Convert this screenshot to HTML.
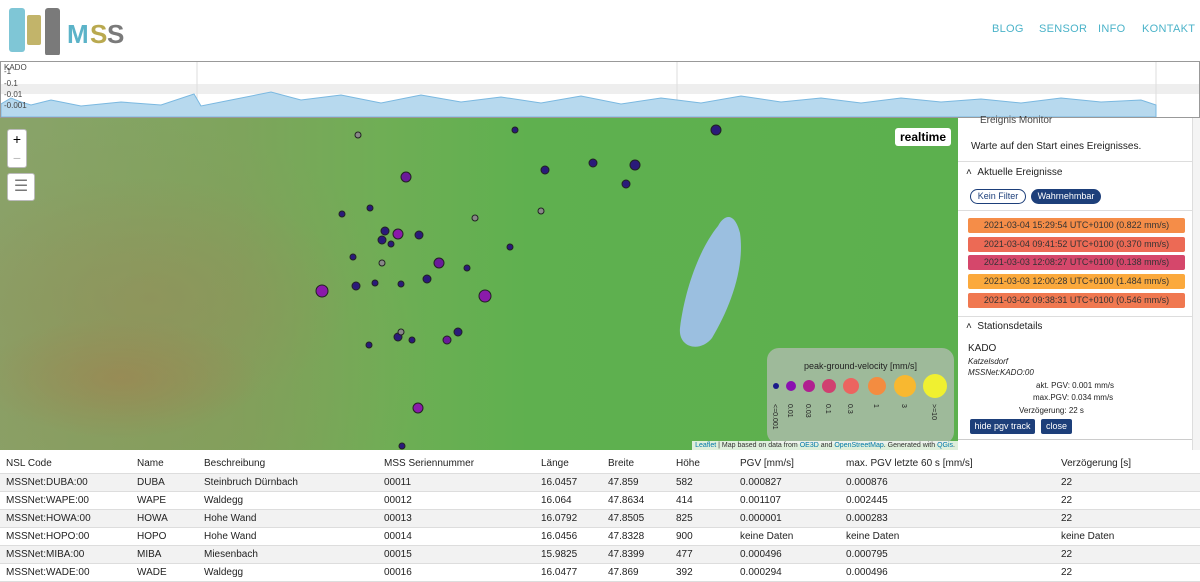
<!DOCTYPE html>
<html><head><meta charset="utf-8"><style>
*{box-sizing:border-box;margin:0;padding:0}
body{width:1200px;height:577px;overflow:hidden;font-family:"Liberation Sans",sans-serif;background:#fff;position:relative}
.nav a{position:absolute;top:23px;color:#4bb3c9;font-size:11px;letter-spacing:.3px;text-decoration:none}
#chart{position:absolute;left:0;top:61px;width:1200px;height:57px;border:1px solid #999;background:#fff}
#map{position:absolute;left:0;top:118px;width:958px;height:332px;overflow:hidden;
background:
radial-gradient(ellipse 140px 60px at 120px 260px,rgba(160,130,80,.6),transparent),
radial-gradient(ellipse 200px 120px at 150px 180px,rgba(150,140,90,.5),transparent),
radial-gradient(ellipse 300px 250px at 130px 250px,rgba(140,150,90,.6),transparent),
linear-gradient(90deg,#8aa36a 0%,#7ea45c 25%,#6fae55 40%,#5fb04f 55%,#5cb04e 100%)}
#panel{position:absolute;left:958px;top:118px;width:234px;height:322px;background:#fff;font-size:10px;color:#222;font-family:"Liberation Sans",sans-serif;border-bottom:1px solid #ccc}
.ev{position:absolute;left:10px;width:217px;height:15px;border-radius:2px;font-size:9px;text-align:center;line-height:15px;color:#333}
table{position:absolute;left:0;top:455px;width:1200px;border-collapse:collapse;font-size:10px;color:#222}
td,th{height:18px;text-align:left;font-weight:normal;padding-left:6px;border-bottom:1px solid #ddd;white-space:nowrap}
tr:nth-child(even) td{background:#f2f2f2}
.btn{position:absolute;background:#1d3f7a;color:#fff;font-size:9px;border-radius:2px;height:15px;line-height:15px;text-align:center}
</style></head><body>
<svg style="position:absolute;left:8px;top:5px" width="120" height="50">
<rect x="1" y="3" width="16" height="44" rx="3" fill="#5fb8cc" opacity=".8"/>
<rect x="19" y="10" width="14" height="30" rx="2" fill="#c2b46a"/>
<rect x="37" y="3" width="15" height="48" rx="3" fill="#7a7a7a"/>
<text x="59" y="38" font-family="Liberation Sans" font-size="26" font-weight="bold" fill="#5bb3c8">M</text>
<text x="82" y="38" font-family="Liberation Sans" font-size="26" font-weight="bold" fill="#b9a94f">S</text>
<text x="99" y="38" font-family="Liberation Sans" font-size="26" font-weight="bold" fill="#7a7a7a">S</text>
</svg>
<div class="nav"><a style="left:992px">BLOG</a><a style="left:1039px">SENSOR</a><a style="left:1098px">INFO</a><a style="left:1142px">KONTAKT</a></div>
<div id="chart">
<svg width="1198" height="55" style="position:absolute;left:0;top:0">
<rect x="0" y="22" width="1198" height="10" fill="#eee"/>
<line x1="196" y1="0" x2="196" y2="55" stroke="#ddd"/><line x1="676" y1="0" x2="676" y2="55" stroke="#ddd"/><line x1="1155" y1="0" x2="1155" y2="55" stroke="#ddd"/>
<path d="M0 42 L10 36 L20 40 L30 43 L50 38 L60 40 L80 44 L120 40 L160 43 L193 32 L200 44 L230 38 L270 30 L300 38 L340 33 L380 41 L420 33 L460 40 L500 35 L540 41 L580 34 L620 42 L660 36 L700 41 L740 34 L780 40 L820 36 L860 41 L900 36 L940 40 L980 37 L1020 41 L1060 36 L1100 40 L1140 38 L1155 43 L1155 55 L0 55Z" fill="#b7d9ee" stroke="#7ab8e0"/>
<text x="3" y="8" font-size="8" fill="#444">KADO</text>
<text x="3" y="12" font-size="8" fill="#444">-1</text>
<text x="3" y="24" font-size="8" fill="#444">-0.1</text>
<text x="3" y="35" font-size="8" fill="#444">-0.01</text>
<text x="3" y="46" font-size="8" fill="#444">-0.001</text>
</svg></div>
<div id="map">
<svg width="958" height="332" style="position:absolute;left:0;top:0">
<path d="M718 108 C700 130 685 170 680 210 C678 230 700 235 712 220 C730 190 745 150 740 115 C735 95 725 95 718 108Z" fill="#9bbfe0"/>
<g stroke="#222" stroke-width="1" fill="#2a1a7a">
<circle cx="716" cy="12" r="5"/><circle cx="593" cy="45" r="4"/><circle cx="635" cy="47" r="5"/><circle cx="545" cy="52" r="4"/><circle cx="626" cy="66" r="4"/><circle cx="515" cy="12" r="3"/>
<circle cx="406" cy="59" r="5" fill="#6a1a9a"/><circle cx="342" cy="96" r="3"/><circle cx="370" cy="90" r="3"/><circle cx="398" cy="116" r="5" fill="#8a1aaa"/><circle cx="385" cy="113" r="4"/><circle cx="382" cy="122" r="4"/><circle cx="391" cy="126" r="3"/><circle cx="419" cy="117" r="4"/><circle cx="353" cy="139" r="3"/><circle cx="439" cy="145" r="5" fill="#6a1a9a"/><circle cx="427" cy="161" r="4"/><circle cx="510" cy="129" r="3"/><circle cx="467" cy="150" r="3"/><circle cx="356" cy="168" r="4"/><circle cx="375" cy="165" r="3"/><circle cx="401" cy="166" r="3"/><circle cx="322" cy="173" r="6" fill="#8a1aaa"/><circle cx="485" cy="178" r="6" fill="#8a1aaa"/><circle cx="458" cy="214" r="4"/><circle cx="447" cy="222" r="4" fill="#6a1a9a"/><circle cx="398" cy="219" r="4"/><circle cx="412" cy="222" r="3"/><circle cx="369" cy="227" r="3"/><circle cx="418" cy="290" r="5" fill="#8a1aaa"/><circle cx="402" cy="328" r="3"/><circle cx="358" cy="17" r="3" fill="#888"/><circle cx="475" cy="100" r="3" fill="#888"/><circle cx="541" cy="93" r="3" fill="#888"/><circle cx="382" cy="145" r="3" fill="#888"/><circle cx="401" cy="214" r="3" fill="#888"/>
</g></svg>
<div style="position:absolute;left:7px;top:11px;width:20px;height:39px;background:#fff;border:1px solid #bbb;border-radius:3px;font-size:14px;text-align:center;line-height:19px">+<br><span style="color:#bbb">−</span></div>
<div style="position:absolute;left:7px;top:55px;width:28px;height:28px;background:#fff;border:1px solid #bbb;border-radius:3px;text-align:center;line-height:26px;color:#777">☰</div>
<div style="position:absolute;left:895px;top:10px;padding:2px 5px;background:#fff;border-radius:3px;font-weight:bold;font-size:12px">realtime</div>
<div style="position:absolute;left:767px;top:230px;width:187px;height:96px;background:rgba(180,190,180,.75);border-radius:12px;font-size:9px;color:#222">
<div style="position:absolute;top:13px;width:100%;text-align:center">peak-ground-velocity [mm/s]</div>
<svg width="187" height="96" style="position:absolute;left:0;top:0">
<circle cx="9" cy="38" r="3" fill="#1a1a8a"/><circle cx="24" cy="38" r="5" fill="#8a10b0"/><circle cx="42" cy="38" r="6" fill="#b02090"/><circle cx="62" cy="38" r="7" fill="#d04070"/><circle cx="84" cy="38" r="8" fill="#ec6460"/><circle cx="110" cy="38" r="9" fill="#f48c40"/><circle cx="138" cy="38" r="11" fill="#f8b830"/><circle cx="168" cy="38" r="12" fill="#f0f030"/>
<g font-size="7" fill="#222"><text transform="translate(6,56) rotate(90)">&lt;=0.001</text><text transform="translate(21,56) rotate(90)">0.01</text><text transform="translate(39,56) rotate(90)">0.03</text><text transform="translate(59,56) rotate(90)">0.1</text><text transform="translate(81,56) rotate(90)">0.3</text><text transform="translate(107,56) rotate(90)">1</text><text transform="translate(135,56) rotate(90)">3</text><text transform="translate(165,56) rotate(90)">&gt;=10</text></g></svg></div>
<div style="position:absolute;right:0;bottom:0;background:rgba(255,255,255,.8);font-size:7px;padding:1px 3px;color:#333"><span style="color:#0078a8">Leaflet</span> | Map based on data from <span style="color:#0078a8">OE3D</span> and <span style="color:#0078a8">OpenStreetMap</span>. Generated with <span style="color:#0078a8">QGis</span>.</div>
</div>
<div style="position:absolute;left:1192px;top:118px;width:8px;height:332px;background:#f4f4f4;border-left:1px solid #ddd"></div>
<div id="panel">
<div style="position:absolute;left:22px;top:-3px;font-size:10px;color:#444">Ereignis Monitor</div>
<div style="position:absolute;left:13px;top:23px">Warte auf den Start eines Ereignisses.</div>
<div style="position:absolute;left:0;top:43px;width:234px;border-top:1px solid #ddd"></div>
<div style="position:absolute;left:8px;top:49px">˄ &nbsp;Aktuelle Ereignisse</div>
<div style="position:absolute;left:12px;top:71px;width:56px;height:15px;border:1px solid #1d3f7a;border-radius:8px;font-size:9px;text-align:center;line-height:13px;color:#1d3f7a">Kein Filter</div>
<div style="position:absolute;left:73px;top:71px;width:70px;height:15px;background:#1d3f7a;border-radius:8px;font-size:9px;text-align:center;line-height:15px;color:#fff">Wahrnehmbar</div>
<div style="position:absolute;left:0;top:92px;width:234px;border-top:1px solid #ddd"></div>
<div class="ev" style="top:100px;background:#f58d48">2021-03-04 15:29:54 UTC+0100 (0.822 mm/s)</div>
<div class="ev" style="top:119px;background:#ec6a55">2021-03-04 09:41:52 UTC+0100 (0.370 mm/s)</div>
<div class="ev" style="top:137px;background:#d5476b">2021-03-03 12:08:27 UTC+0100 (0.138 mm/s)</div>
<div class="ev" style="top:156px;background:#fba93c">2021-03-03 12:00:28 UTC+0100 (1.484 mm/s)</div>
<div class="ev" style="top:175px;background:#f07850">2021-03-02 09:38:31 UTC+0100 (0.546 mm/s)</div>
<div style="position:absolute;left:0;top:198px;width:234px;border-top:1px solid #ddd"></div>
<div style="position:absolute;left:8px;top:203px">˄ &nbsp;Stationsdetails</div>
<div style="position:absolute;left:10px;top:225px;font-size:10px">KADO</div>
<div style="position:absolute;left:10px;top:239px;font-size:8px;font-style:italic">Katzelsdorf</div>
<div style="position:absolute;left:10px;top:250px;font-size:8px;font-style:italic">MSSNet:KADO:00</div>
<div style="position:absolute;left:78px;top:263px;font-size:8px">akt. PGV: 0.001 mm/s</div>
<div style="position:absolute;left:75px;top:275px;font-size:8px">max.PGV: 0.034 mm/s</div>
<div style="position:absolute;left:61px;top:288px;font-size:8px">Verzögerung: 22 s</div>
<div class="btn" style="left:12px;top:301px;width:65px">hide pgv track</div>
<div class="btn" style="left:83px;top:301px;width:31px">close</div>
</div>
<table>
<tr><td style="width:131px">NSL Code</td><td style="width:67px">Name</td><td style="width:180px">Beschreibung</td><td style="width:157px">MSS Seriennummer</td><td style="width:67px">Länge</td><td style="width:68px">Breite</td><td style="width:64px">Höhe</td><td style="width:106px">PGV [mm/s]</td><td style="width:215px">max. PGV letzte 60 s [mm/s]</td><td>Verzögerung [s]</td></tr>
<tr><td>MSSNet:DUBA:00</td><td>DUBA</td><td>Steinbruch Dürnbach</td><td>00011</td><td>16.0457</td><td>47.859</td><td>582</td><td>0.000827</td><td>0.000876</td><td>22</td></tr>
<tr><td>MSSNet:WAPE:00</td><td>WAPE</td><td>Waldegg</td><td>00012</td><td>16.064</td><td>47.8634</td><td>414</td><td>0.001107</td><td>0.002445</td><td>22</td></tr>
<tr><td>MSSNet:HOWA:00</td><td>HOWA</td><td>Hohe Wand</td><td>00013</td><td>16.0792</td><td>47.8505</td><td>825</td><td>0.000001</td><td>0.000283</td><td>22</td></tr>
<tr><td>MSSNet:HOPO:00</td><td>HOPO</td><td>Hohe Wand</td><td>00014</td><td>16.0456</td><td>47.8328</td><td>900</td><td>keine Daten</td><td>keine Daten</td><td>keine Daten</td></tr>
<tr><td>MSSNet:MIBA:00</td><td>MIBA</td><td>Miesenbach</td><td>00015</td><td>15.9825</td><td>47.8399</td><td>477</td><td>0.000496</td><td>0.000795</td><td>22</td></tr>
<tr><td>MSSNet:WADE:00</td><td>WADE</td><td>Waldegg</td><td>00016</td><td>16.0477</td><td>47.869</td><td>392</td><td>0.000294</td><td>0.000496</td><td>22</td></tr>
</table>
</body></html>
